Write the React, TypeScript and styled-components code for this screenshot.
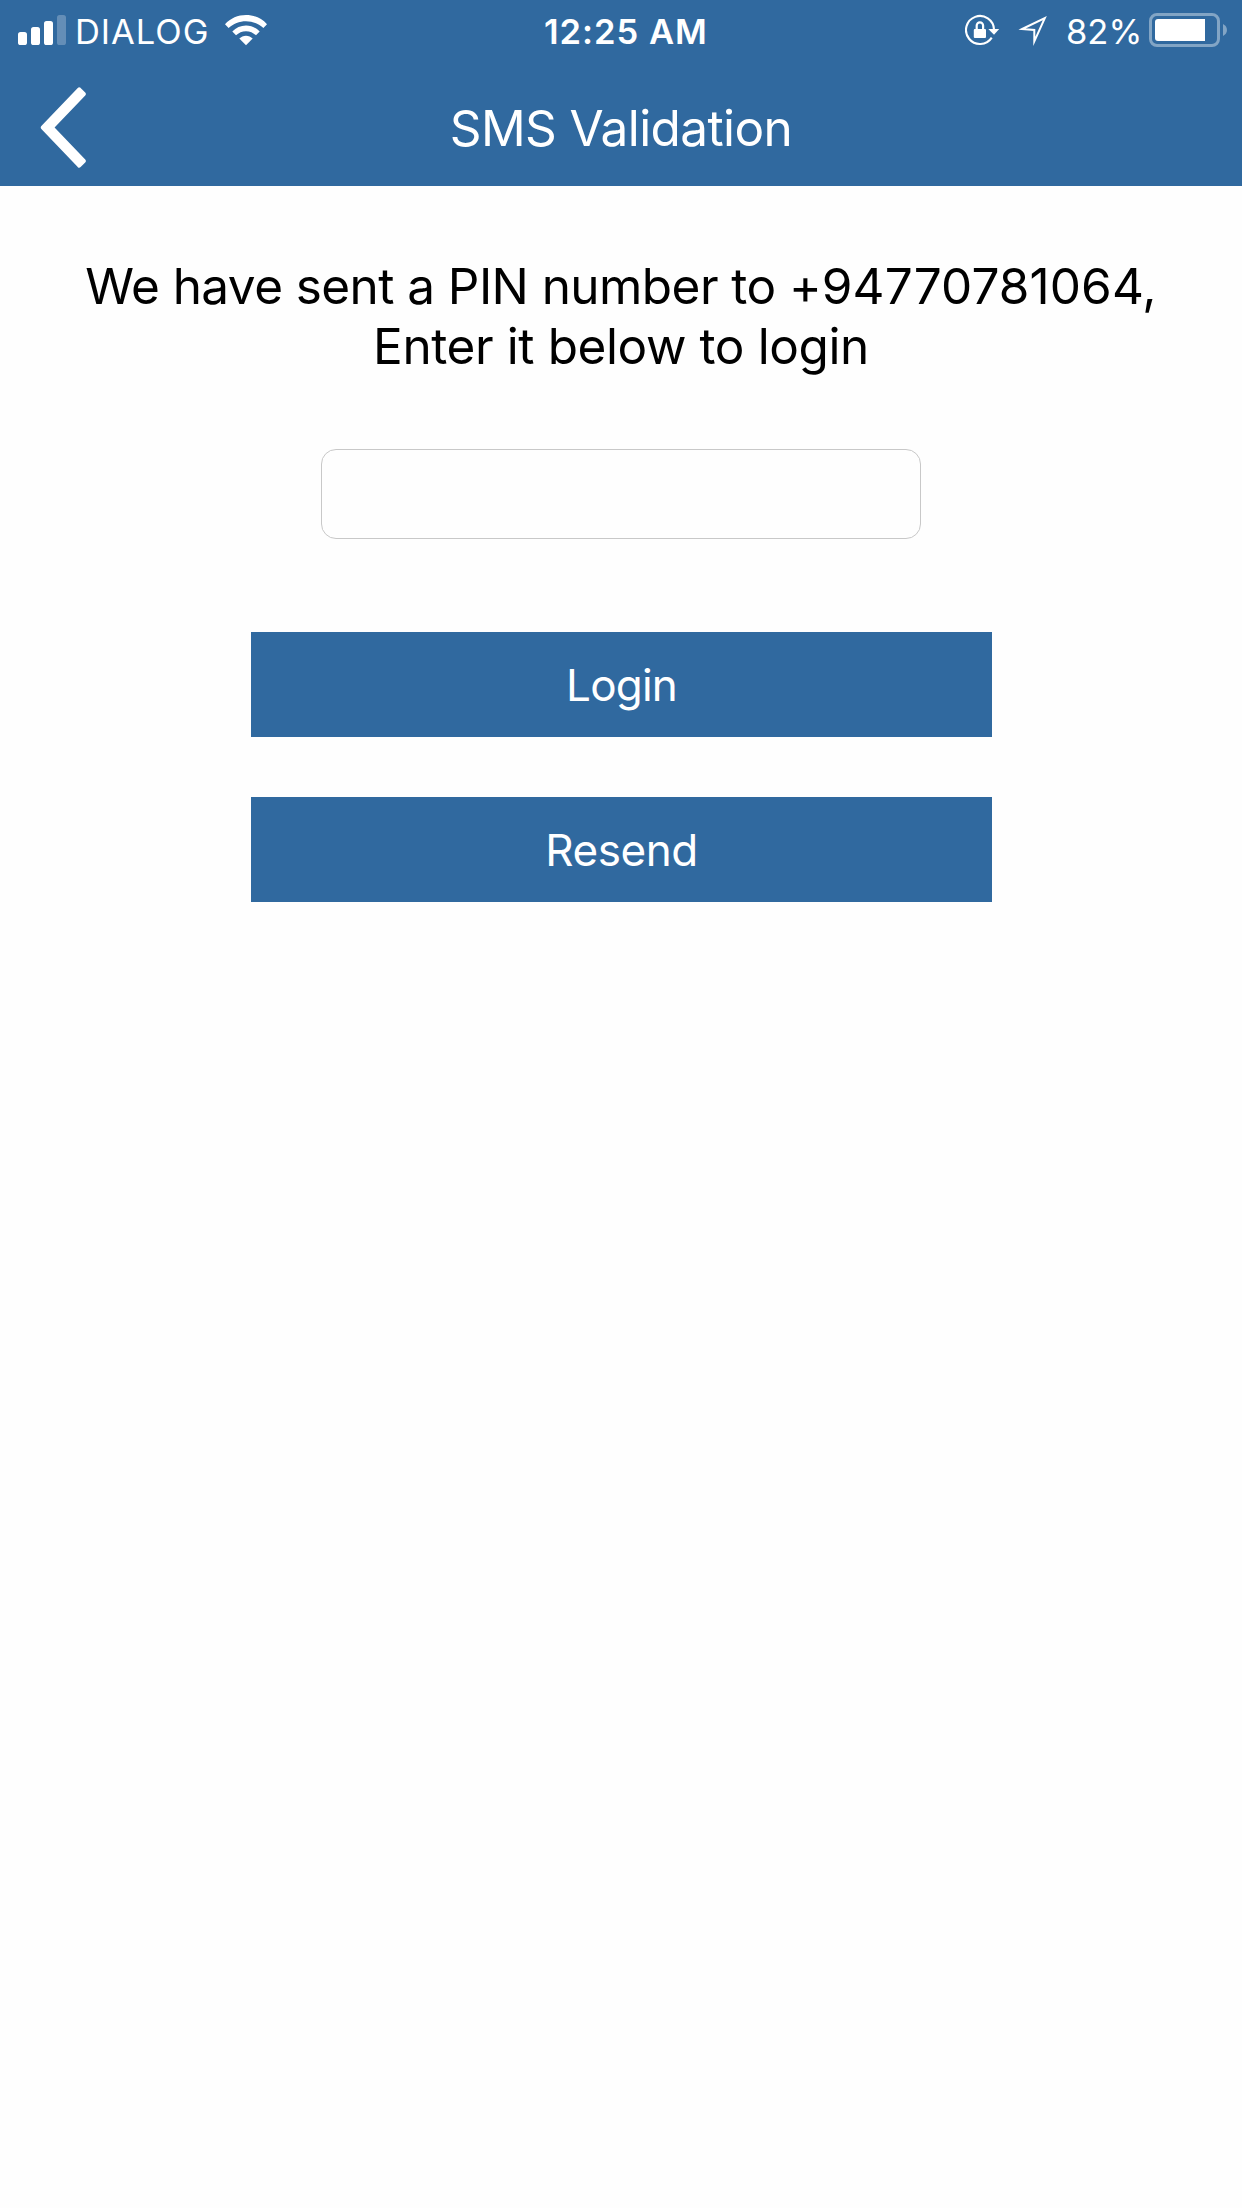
import React from 'react';
import styled, { createGlobalStyle } from 'styled-components';

const BLUE = '#30699f';

const GlobalStyle = createGlobalStyle`
  *, *::before, *::after { box-sizing: border-box; }
  body {
    margin: 0;
    background: #fefefe;
    font-family: Inter, "Liberation Sans", sans-serif;
    font-weight: 400;
  }
  svg { display: block; flex: none; }
`;

const Screen = styled.div`
  display: flex;
  flex-direction: column;
  width: 1242px;
  height: 2208px;
  background: #fefefe;
  overflow: hidden;
`;

const Header = styled.header`
  height: 186px;
  background: ${BLUE};
  color: #fff;
`;

const StatusBar = styled.div`
  display: grid;
  grid-template-columns: 526px 1fr auto;
  height: 60px;
  padding: 0 15px 0 18px;
`;

const StatusGroup = styled.div<{ $gap?: number }>`
  display: flex;
  align-items: flex-start;
  gap: ${(p) => p.$gap ?? 0}px;
`;

const StatusText = styled.span<{ $weight: number; $spacing: number }>`
  padding-top: 3px;
  font-size: 34.5px;
  line-height: 57px;
  font-weight: ${(p) => p.$weight};
  letter-spacing: ${(p) => p.$spacing}px;
  white-space: nowrap;
`;

const Carrier = styled(StatusText)`
  width: 150px;
  margin-left: 9px;
`;

const Percent = styled(StatusText)`
  width: 83px;
`;

const NavBar = styled.div`
  display: grid;
  grid-template-columns: 100px 1fr 100px;
  height: 126px;
`;

const BackButton = styled.button`
  display: flex;
  padding: 27px 0 0 40px;
  border: 0;
  background: none;
`;

const Title = styled.h1`
  margin: 0;
  padding-top: 10px;
  text-align: center;
  font-size: 49.5px;
  line-height: 116px;
  font-weight: 400;
  letter-spacing: -0.6px;
`;

const Main = styled.main`
  display: flex;
  flex-direction: column;
  align-items: center;
  padding-top: 70px;
`;

const Message = styled.p`
  display: flex;
  flex-direction: column;
  align-items: center;
  margin: 0 0 73px;
  font-size: 49.5px;
  line-height: 60px;
  color: #000;
`;

const Line = styled.span<{ $spacing: number }>`
  letter-spacing: ${(p) => p.$spacing}px;
  white-space: pre;
`;

const Phone = styled.span`
  letter-spacing: 0.1px;
`;

const PinInput = styled.input`
  width: 600px;
  height: 90px;
  margin: 0 0 93px;
  padding: 0 20px;
  border: 1px solid #c8c8c8;
  border-radius: 15px;
  background: #fefefe;
  font: inherit;
  font-size: 44px;
  outline: none;
`;

const Actions = styled.div`
  display: flex;
  flex-direction: column;
  gap: 60px;
  padding-left: 1px;
`;

const Action = styled.button<{ $spacing: number }>`
  width: 741px;
  height: 105px;
  padding: 1px 0 0;
  border: 0;
  background: ${BLUE};
  color: #fff;
  font-family: inherit;
  font-size: 44px;
  font-weight: 400;
  line-height: 104px;
  letter-spacing: ${(p) => p.$spacing}px;
`;

const SignalIcon = () => (
  <svg width="48" height="60" viewBox="0 0 48 60" fill="#fff">
    <rect x="0" y="32" width="9" height="13" rx="2.6" />
    <rect x="13" y="27" width="9" height="18" rx="2.6" />
    <rect x="26" y="21" width="9" height="24" rx="2.6" />
    <rect x="39" y="15" width="9" height="30" rx="2.6" opacity="0.25" />
  </svg>
);

const WifiIcon = () => (
  <svg width="42" height="60" viewBox="0 0 42 60" fill="#fff">
    <path d="M0 24.2C5.6 18.2 12.9 15 21 15s15.400 3.200 21 9.200L38.400 28C33.700 23.600 27.600 21.200 21 21.200S8.300 23.600 3.600 28Z" />
    <path d="M7.300 31.600C11 27.600 15.700 25.400 21 25.400s10 2.200 13.700 6.200L31 35.300C28.300 32.800 24.900 31.200 21 31.200s-7.300 1.600-10 4.100Z" />
    <path d="M14.300 38.600C16.200 36.800 18.400 35.700 21 35.700s4.800 1.100 6.700 2.900L21 45.300Z" />
  </svg>
);

const LockIcon = () => (
  <svg width="36" height="60" viewBox="0 0 36 60">
    <path d="M26.740 37.630A14 14 0 1 1 29 29.500" fill="none" stroke="#fff" strokeWidth="2.100" />
    <path d="M23.300 29H34.200L29 34.700Z" fill="#fff" />
    <rect x="8.800" y="29" width="12.200" height="9" rx="1" fill="#fff" />
    <path d="M11.700 30V25.500a3.200 3.200 0 0 1 6.400 0V30" fill="none" stroke="#fff" strokeWidth="2.200" />
  </svg>
);

const LocationIcon = () => (
  <svg width="31" height="60" viewBox="0 0 31 60">
    <path d="M4.200 29L26.800 18.100 16.300 41.300V30Z" fill="none" stroke="#fff" strokeWidth="2" strokeMiterlimit="10" />
  </svg>
);

const BatteryIcon = () => (
  <svg width="78" height="60" viewBox="0 0 78 60">
    <rect x="1.500" y="14.500" width="68" height="31" rx="6.500" fill="none" stroke="#fff" strokeOpacity="0.4" strokeWidth="3" />
    <path d="M9 19h47v22H9a3 3 0 0 1-3-3V22a3 3 0 0 1 3-3Z" fill="#fff" />
    <path d="M74 24c5.300 2.500 5.300 9.500 0 12Z" fill="#fff" fillOpacity="0.4" />
  </svg>
);

const ChevronIcon = () => (
  <svg width="47" height="82" viewBox="0 0 47 82">
    <path
      d="M39.200 2.300L43.800 7 11.700 40.500 43.800 74 39.200 78.700 2.800 40.500Z"
      fill="#fff"
      stroke="#fff"
      strokeWidth="4"
      strokeLinejoin="round"
    />
  </svg>
);

export default function App() {
  return (
    <Screen>
      <GlobalStyle />
      <Header>
        <StatusBar>
          <StatusGroup>
            <SignalIcon />
            <Carrier $weight={400} $spacing={0.95}>DIALOG</Carrier>
            <WifiIcon />
          </StatusGroup>
          <StatusGroup>
            <StatusText $weight={600} $spacing={1}>12:25 AM</StatusText>
          </StatusGroup>
          <StatusGroup $gap={17}>
            <LockIcon />
            <LocationIcon />
            <StatusGroup>
              <Percent $weight={400} $spacing={0}>82%</Percent>
              <BatteryIcon />
            </StatusGroup>
          </StatusGroup>
        </StatusBar>
        <NavBar>
          <BackButton aria-label="Back">
            <ChevronIcon />
          </BackButton>
          <Title>SMS Validation</Title>
        </NavBar>
      </Header>
      <Main>
        <Message>
          <Line $spacing={-0.57}>
            We have sent a PIN number to <Phone>+94770781064,</Phone>
          </Line>
          <Line $spacing={-0.41}>Enter it below to login</Line>
        </Message>
        <PinInput aria-label="PIN" />
        <Actions>
          <Action $spacing={-0.8}>Login</Action>
          <Action $spacing={-0.4}>Resend</Action>
        </Actions>
      </Main>
    </Screen>
  );
}
